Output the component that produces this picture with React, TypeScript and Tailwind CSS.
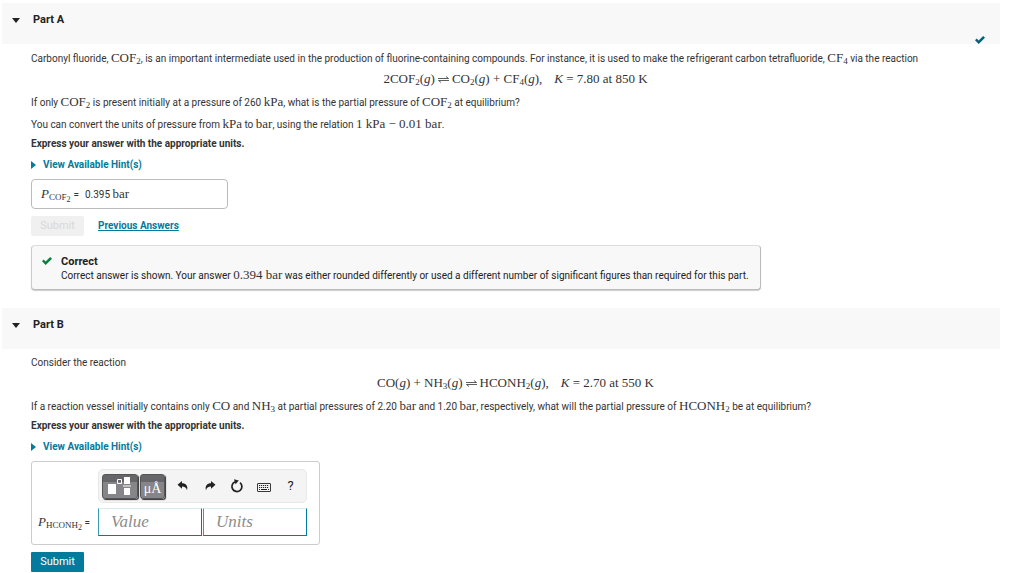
import type { ReactNode } from "react";

function M({ children }: { children: ReactNode }) {
  return <span className="font-['Liberation_Serif',serif] text-[13px] leading-none text-[#333]">{children}</span>;
}

function Sub({ children }: { children: ReactNode }) {
  return <sub className="bottom-0 align-[-2px] text-[9px] leading-none">{children}</sub>;
}

function Gas() {
  return (
    <>
      (<i>g</i>)
    </>
  );
}

function Harpoons() {
  return (
    <svg aria-label="is in equilibrium with" role="img" viewBox="0 0 11 7" className="mx-[3px] inline-block h-[7px] w-[11px] align-baseline" fill="none" stroke="#333" strokeWidth="0.8">
      <path d="M0 2.5H10.5L8 0.5M11 4.5H0.5L3 6.5" />
    </svg>
  );
}

function Check({ className }: { className: string }) {
  return (
    <svg aria-hidden="true" viewBox="1 1 10 8" className={className} fill="currentColor">
      <path d="M1 5.3 2.7 3.6 4.6 5.4 9.2 1 11 2.7 4.7 9Z" />
    </svg>
  );
}

function PartHeader({ title, done }: { title: string; done?: boolean }) {
  return (
    <header className="flex h-[41px] items-start justify-between bg-[#f8f8f8] pr-[15px] pl-[10px]">
      <button type="button" className="flex h-[34px] items-center gap-[13px]">
        <svg aria-hidden="true" viewBox="0 0 8 5" className="h-[5px] w-[8px]" fill="#222">
          <path d="M0 0H8L4 5Z" />
        </svg>
        <h2 className="text-[11px] font-bold text-[#222]">{title}</h2>
      </button>
      {done && <Check className="h-[8px] w-[10px] self-end text-[#0b6078]" />}
    </header>
  );
}

function Hints() {
  return (
    <button type="button" className="mt-[3px] flex h-[18px] items-center gap-[7px] text-[10px] font-bold text-[#047a9c]">
      <svg aria-hidden="true" viewBox="0 0 5 8" className="h-[8px] w-[5px]" fill="currentColor">
        <path d="M0 0 5 4 0 8Z" />
      </svg>
      View Available Hint(s)
    </button>
  );
}

function ToolButton({ label, children }: { label: string; children: ReactNode }) {
  return (
    <button type="button" aria-label={label} className="flex h-5 w-[27px] items-center justify-center text-[#222]">
      {children}
    </button>
  );
}

function Toolbar() {
  return (
    <div className="flex h-[34px] items-center rounded-[5px] border border-[#e8e8e8] bg-[#f4f4f4] pl-[3px]">
      <button type="button" aria-label="Templates" className="flex h-[25px] w-[36px] items-center justify-center rounded-[3px] border border-[#555] bg-linear-to-b from-[#65656a] from-30% to-[#85858a] to-30% shadow-[1px_1px_1px_#333]">
        <svg aria-hidden="true" viewBox="0 0 24 20" className="h-5 w-6" fill="#fff">
          <path d="M0 8h8v10H0zM16 1h6v7h-6zM15 9.5h8v1h-8zM16 12h6v7h-6z" />
          <path d="M9.5 3.5h4v4h-4z" fill="none" stroke="#fff" />
        </svg>
      </button>
      <button type="button" className="ml-[2px] flex h-[25px] w-[25px] items-center justify-center rounded-[3px] border border-[#555] bg-linear-to-b from-[#65656a] from-30% to-[#85858a] to-30% pt-[5px] font-['Liberation_Serif',serif] text-[14px] leading-none text-white shadow-[1px_1px_1px_#333]">
        μÅ
      </button>
      <div className="ml-[4px] flex">
        <ToolButton label="Undo">
          <svg aria-hidden="true" viewBox="0 0 12 10" className="h-[10px] w-[12px]" fill="currentColor">
            <path d="M0.5 3.8 5 0V2.3C9 2.3 11.2 5 10 9.3 9.3 6.7 8 5.5 5 5.5V7.8Z" />
          </svg>
        </ToolButton>
        <ToolButton label="Redo">
          <svg aria-hidden="true" viewBox="0 0 12 10" className="h-[10px] w-[12px]" fill="currentColor">
            <path d="M11.5 3.8 7 0V2.3C3 2.3 0.8 5 2 9.3 2.7 6.7 4 5.5 7 5.5V7.8Z" />
          </svg>
        </ToolButton>
        <ToolButton label="Reset">
          <svg aria-hidden="true" viewBox="0 0 14 14" className="h-[14px] w-[14px]" fill="none" stroke="currentColor" strokeWidth="1.7">
            <path d="M10 3.6A5 5 0 1 1 5.3 2.8" />
            <path d="M4 0.3 8.8 1.5 5.6 5.2Z" fill="currentColor" stroke="none" />
          </svg>
        </ToolButton>
        <ToolButton label="Keyboard shortcuts">
          <svg aria-hidden="true" viewBox="0 0 14 9" className="mt-[2px] h-[9px] w-[14px]" fill="none" stroke="currentColor">
            <rect x="0.5" y="0.5" width="13" height="8" rx="0.5" strokeWidth="0.9" />
            <path d="M2 2.5h10M2 4.5h10" strokeDasharray="1.2 0.8" />
            <path d="M2 6.5h1M4 6.5h6M11 6.5h1" />
          </svg>
        </ToolButton>
        <button type="button" aria-label="Help" className="flex h-5 w-[27px] items-center justify-center text-[13px] text-[#222]">
          ?
        </button>
      </div>
    </div>
  );
}

const field =
  "h-[28px] min-w-0 flex-1 border border-t-[#d9ecef] border-r-[#047a9c] border-b-[#047a9c] border-l-[#3c9ab4] bg-white px-[12px] font-['Liberation_Serif',serif] text-[17px] italic outline-none placeholder:text-[#8c8c8c]";

export default function App() {
  return (
    <main className="bg-white pt-[3px] pr-6 pl-[2px] font-[Roboto,sans-serif] text-[10px] leading-[18px] text-[#333]">
      <section>
        <PartHeader title="Part A" done />
        <div className="pt-[6px] pl-[29px]">
          <p className="h-[18px]">
            Carbonyl fluoride, <M>COF<Sub>2</Sub></M>, is an important intermediate used in the production of fluorine-containing compounds. For instance, it is used to make the refrigerant carbon tetrafluoride, <M>CF<Sub>4</Sub></M> via the reaction
          </p>
          <p className="mt-[3px] h-[18px] text-center">
            <M>
              2COF<Sub>2</Sub><Gas /><Harpoons />CO<Sub>2</Sub><Gas /> + CF<Sub>4</Sub><Gas />,<i className="ml-[12px]">K</i> = 7.80 at 850 K
            </M>
          </p>
          <p className="mt-[5px] h-[18px]">
            If only <M>COF<Sub>2</Sub></M> is present initially at a pressure of 260 <M>kPa</M>, what is the partial pressure of <M>COF<Sub>2</Sub></M> at equilibrium?
          </p>
          <p className="mt-[4px] h-[18px]">
            You can convert the units of pressure from <M>kPa</M> to <M>bar</M>, using the relation <M>1 kPa − 0.01 bar</M>.
          </p>
          <p className="mt-px h-[18px] font-bold">Express your answer with the appropriate units.</p>
          <Hints />
          <div className="mt-[5px] h-[30px] w-[197px] rounded-[4px] border border-[#bbb] pt-[6px] pl-[9px]">
            <M><i>P</i><Sub>COF<span className="align-[-2px] text-[8px]">2</span></Sub></M>
            <span className="ml-[3px]">=</span>
            <span className="ml-[6px]">0.395 <M>bar</M></span>
          </div>
          <div className="mt-[7px] flex items-center">
            <button type="button" disabled className="h-5 w-[53px] rounded-[2px] bg-[#f0f0f0] text-[11px] text-[#d8d8d8]">
              Submit
            </button>
            <a href="#previous-answers" className="ml-[14px] text-[10px] font-bold text-[#047a9c] underline">
              Previous Answers
            </a>
          </div>
          <div className="mt-[9px] flex h-[45px] w-[730px] max-w-full rounded-[4px] border border-t-[#ddd] border-r-[#bbb] border-b-[#bbb] border-l-[#ccc] bg-[#f8f8f8] pt-[9px] pl-[10px] shadow-[0_1px_1px_#ccc]">
            <Check className="mt-[2px] h-[8px] w-[10px] text-[#0a8040]" />
            <div className="ml-[9px] text-[#222]">
              <h3 className="text-[11px] leading-[13px] font-bold">Correct</h3>
              <p className="leading-[11px]">
                Correct answer is shown. Your answer <M>0.394 bar</M> was either rounded differently or used a different number of significant figures than required for this part.
              </p>
            </div>
          </div>
        </div>
      </section>

      <section className="mt-[18px]">
        <PartHeader title="Part B" />
        <div className="pt-[5px] pl-[29px]">
          <p className="h-[18px]">Consider the reaction</p>
          <p className="mt-[3px] h-[18px] text-center">
            <M>
              CO<Gas /> + NH<Sub>3</Sub><Gas /><Harpoons />HCONH<Sub>2</Sub><Gas />,<i className="ml-[12px]">K</i> = 2.70 at 550 K
            </M>
          </p>
          <p className="mt-[5px] h-[18px]">
            If a reaction vessel initially contains only <M>CO</M> and <M>NH<Sub>3</Sub></M> at partial pressures of 2.20 <M>bar</M> and 1.20 <M>bar</M>, respectively, what will the partial pressure of <M>HCONH<Sub>2</Sub></M> be at equilibrium?
          </p>
          <p className="mt-px h-[18px] font-bold">Express your answer with the appropriate units.</p>
          <Hints />
          <div className="mt-[5px] grid w-[289px] grid-cols-[58px_209px] gap-x-[8px] gap-y-[5px] rounded-[3px] border border-[#ccc] pt-[7px] pb-[8px]">
            <div className="col-start-2">
              <Toolbar />
            </div>
            <label htmlFor="pressure-value" className="pt-[6px] text-right whitespace-nowrap">
              <M><i>P</i><Sub>HCONH<span className="align-[-2px] text-[8px]">2</span></Sub></M> =
            </label>
            <div className="flex gap-px">
              <input id="pressure-value" aria-label="Value" placeholder="Value" className={field} />
              <input aria-label="Units" placeholder="Units" className={field} />
            </div>
          </div>
          <button type="button" className="mt-[7px] block h-5 w-[53px] rounded-[1px] bg-[#047a9c] text-[11px] text-white">
            Submit
          </button>
        </div>
      </section>
    </main>
  );
}
